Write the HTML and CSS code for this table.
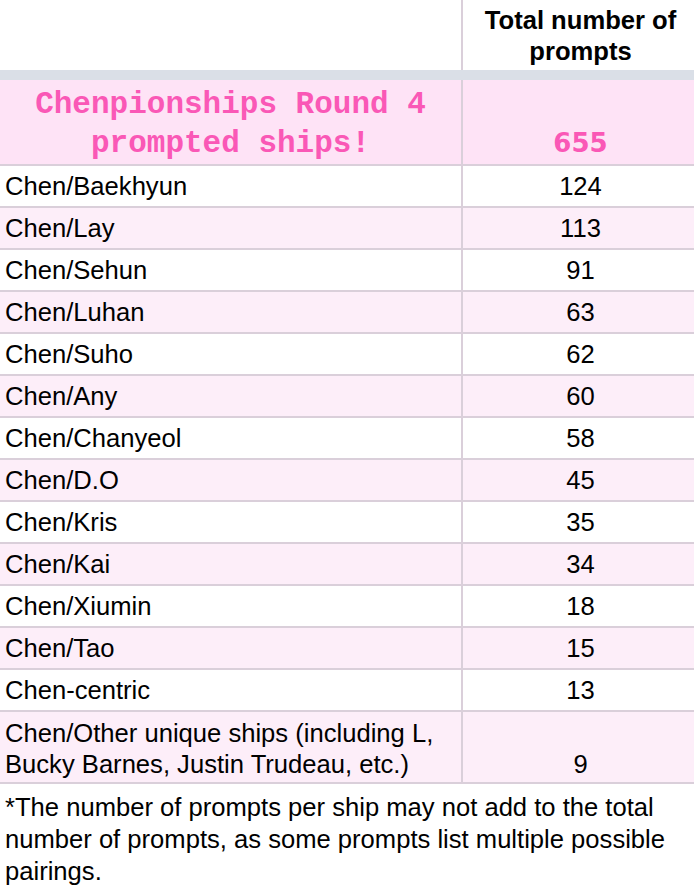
FILE: index.html
```html
<!DOCTYPE html>
<html lang="en">
<head>
<meta charset="utf-8">
<title>Chenpionships Round 4</title>
<link rel="stylesheet" href="styles.css">
</head>
<body>
<div class="sheet">
  <div class="row head">
    <div class="c1"></div>
    <div class="c2">Total number of<br>prompts</div>
  </div>
  <div class="band"></div>
  <div class="row title">
    <div class="c1">Chenpionships Round 4<br>prompted ships!</div>
    <div class="c2">655</div>
  </div>
  <div class="row"><div class="c1">Chen/Baekhyun</div><div class="c2">124</div></div>
  <div class="row alt"><div class="c1">Chen/Lay</div><div class="c2">113</div></div>
  <div class="row"><div class="c1">Chen/Sehun</div><div class="c2">91</div></div>
  <div class="row alt"><div class="c1">Chen/Luhan</div><div class="c2">63</div></div>
  <div class="row"><div class="c1">Chen/Suho</div><div class="c2">62</div></div>
  <div class="row alt"><div class="c1">Chen/Any</div><div class="c2">60</div></div>
  <div class="row"><div class="c1">Chen/Chanyeol</div><div class="c2">58</div></div>
  <div class="row alt"><div class="c1">Chen/D.O</div><div class="c2">45</div></div>
  <div class="row"><div class="c1">Chen/Kris</div><div class="c2">35</div></div>
  <div class="row alt"><div class="c1">Chen/Kai</div><div class="c2">34</div></div>
  <div class="row"><div class="c1">Chen/Xiumin</div><div class="c2">18</div></div>
  <div class="row alt"><div class="c1">Chen/Tao</div><div class="c2">15</div></div>
  <div class="row"><div class="c1">Chen-centric</div><div class="c2">13</div></div>
  <div class="row alt tall"><div class="c1">Chen/Other unique ships (including L,<br>Bucky Barnes, Justin Trudeau, etc.)</div><div class="c2">9</div></div>
</div>
<p class="note">*The number of prompts per ship may not add to the total<br>number of prompts, as some prompts list multiple possible<br>pairings.</p>
</body>
</html>
```

FILE: styles.css
```css
html, body {
  margin: 0;
  padding: 0;
  background: #ffffff;
}

body {
  font-family: "Liberation Sans", Arial, sans-serif;
  color: #000000;
  font-size: 25.6px;
}

.sheet {
  width: 694px;
}

.row {
  display: flex;
  height: 40px;
  border-bottom: 2px solid #dacfda;
  line-height: 28px;
}

.row.alt {
  background: #fdeef9;
}

.c1 {
  width: 463px;
  flex: none;
  border-right: 2px solid #dacfda;
  padding-left: 5px;
  padding-top: 6px;
  box-sizing: border-box;
  white-space: nowrap;
}

.c2 {
  flex: 1;
  text-align: center;
  padding-left: 4px;
  padding-top: 6px;
  white-space: nowrap;
}

.head {
  height: 70px;
  border-bottom: none;
}

.head .c1 {
  padding-top: 0;
}

.head .c2 {
  font-weight: bold;
  line-height: 31px;
  padding-top: 5px;
}

.band {
  height: 10px;
  background: #dadfe7;
}

.title {
  height: 84px;
  background: #fee3f6;
  color: #fa58b6;
  font-weight: bold;
}

.title .c1 {
  font-family: "Liberation Mono", "Courier New", monospace;
  font-size: 31px;
  line-height: 39px;
  text-align: center;
  padding-left: 0;
  padding-top: 5px;
}

.title .c2 {
  font-family: "DejaVu Sans", Verdana, sans-serif;
  font-size: 26px;
  line-height: 39px;
  padding-top: 44px;
}

.tall {
  height: 70px;
  line-height: 31px;
}

.tall .c1 {
  padding-top: 6px;
}

.tall .c2 {
  padding-top: 37px;
}

.note {
  margin: 0;
  padding: 7px 5px 0;
  line-height: 32px;
  white-space: nowrap;
}
```
